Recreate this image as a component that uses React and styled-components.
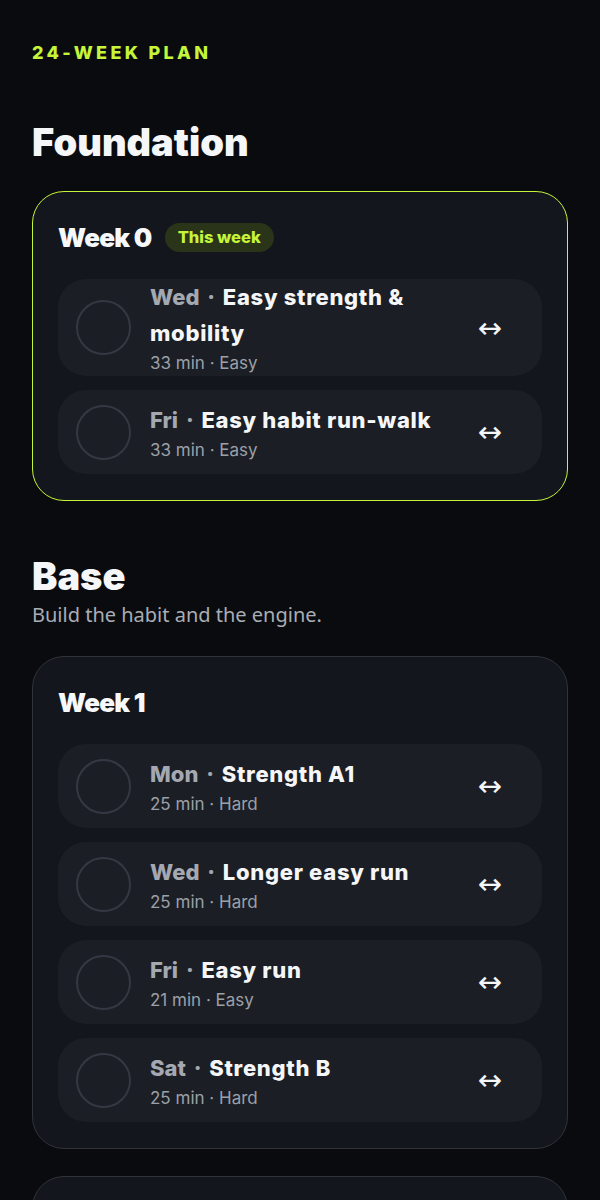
import styled, { createGlobalStyle } from 'styled-components'

const GlobalStyle = createGlobalStyle`
  html, body {
    margin: 0;
    background: #0a0b0e;
  }
  body {
    font-family: Inter, "Noto Sans", sans-serif;
    color: #f3f4f6;
  }
`

const Page = styled.main`
  padding: 40px 32px 0;
  display: flex;
  flex-direction: column;
`

const Eyebrow = styled.div`
  font-size: 18px;
  font-weight: 800;
  letter-spacing: 3.3px;
  color: #c5f53a;
  line-height: 26px;
`

const Phase = styled.section`
  margin-top: ${p => p.$first ? '54px' : '53px'};
`

const PhaseTitle = styled.h2`
  margin: 0;
  font-size: 38px;
  font-weight: 900;
  letter-spacing: 0;
  line-height: 44px;
  color: #f5f6f8;
`

const PhaseNote = styled.p`
  margin: 3px 0 0;
  font-family: "Noto Sans", Inter, sans-serif;
  font-size: 20px;
  line-height: 28px;
  color: #a9adb5;
`

const WeekCard = styled.div`
  margin-top: 27px;
  border: 1.5px solid ${p => p.$current ? '#c5f53a' : '#30333a'};
  border-radius: 32px;
  background: #13161c;
  padding: 30px 25px 26px;
  display: flex;
  flex-direction: column;
  gap: 14px;
`

const WeekHead = styled.div`
  display: flex;
  align-items: center;
  gap: 13px;
  height: 30px;
  margin-bottom: 13px;
`

const WeekTitle = styled.h3`
  margin: 0;
  font-size: 26px;
  font-weight: 900;
  letter-spacing: -0.7px;
  color: #f7f8fa;
`

const Badge = styled.span`
  display: inline-flex;
  align-items: center;
  height: 29px;
  padding: 0 13px;
  border-radius: 15px;
  background: #2a3418;
  color: #c5f53a;
  font-size: 16.5px;
  font-weight: 800;
`

const Session = styled.div`
  min-height: 84px;
  border-radius: 28px;
  background: #1b1e25;
  display: flex;
  align-items: center;
  padding: 0 28px 0 18px;
`

const Check = styled.span`
  flex: none;
  width: 51px;
  height: 51px;
  border: 2px solid #353842;
  border-radius: 50%;
`

const Body = styled.div`
  flex: 1;
  margin-left: 19px;
  display: flex;
  flex-direction: column;
`

const Title = styled.div`
  font-size: 22px;
  font-weight: 800;
  line-height: 36px;
  color: #f5f6f8;
`

const Day = styled.span`
  color: #a4a8b0;
  word-spacing: 3px;
`

const Name = styled.span`
  letter-spacing: 0.7px;
`

const Meta = styled.div`
  font-size: 17px;
  line-height: 25px;
  color: #9ca0a8;
`

const Swap = styled.button`
  flex: none;
  width: 48px;
  height: 48px;
  margin-left: 8px;
  border: none;
  background: transparent;
  color: #f5f6f8;
  font-family: "DejaVu Sans", sans-serif;
  font-size: 29px;
  padding: 0;
`

const plan = [
  {
    name: 'Foundation',
    weeks: [
      {
        label: 'Week 0',
        current: true,
        sessions: [
          { day: 'Wed', title: 'Easy strength & mobility', min: 33, level: 'Easy' },
          { day: 'Fri', title: 'Easy habit run-walk', min: 33, level: 'Easy' },
        ],
      },
    ],
  },
  {
    name: 'Base',
    note: 'Build the habit and the engine.',
    weeks: [
      {
        label: 'Week 1',
        sessions: [
          { day: 'Mon', title: 'Strength A1', min: 25, level: 'Hard' },
          { day: 'Wed', title: 'Longer easy run', min: 25, level: 'Hard' },
          { day: 'Fri', title: 'Easy run', min: 21, level: 'Easy' },
          { day: 'Sat', title: 'Strength B', min: 25, level: 'Hard' },
        ],
      },
      {
        label: 'Week 2',
        sessions: [
          { day: 'Mon', title: 'Strength A2', min: 25, level: 'Hard' },
        ],
      },
    ],
  },
]

function App() {
  return (
    <>
      <GlobalStyle />
      <Page>
        <Eyebrow>24-WEEK PLAN</Eyebrow>
        {plan.map((phase, i) => (
          <Phase key={phase.name} $first={i === 0}>
            <PhaseTitle>{phase.name}</PhaseTitle>
            {phase.note && <PhaseNote>{phase.note}</PhaseNote>}
            {phase.weeks.map(week => (
              <WeekCard key={week.label} $current={week.current}>
                <WeekHead>
                  <WeekTitle>{week.label}</WeekTitle>
                  {week.current && <Badge>This week</Badge>}
                </WeekHead>
                {week.sessions.map(s => (
                  <Session key={s.day + s.title}>
                    <Check />
                    <Body>
                      <Title><Day>{s.day} · </Day><Name>{s.title}</Name></Title>
                      <Meta>{s.min} min · {s.level}</Meta>
                    </Body>
                    <Swap>↔</Swap>
                  </Session>
                ))}
              </WeekCard>
            ))}
          </Phase>
        ))}
      </Page>
    </>
  )
}

export default App
